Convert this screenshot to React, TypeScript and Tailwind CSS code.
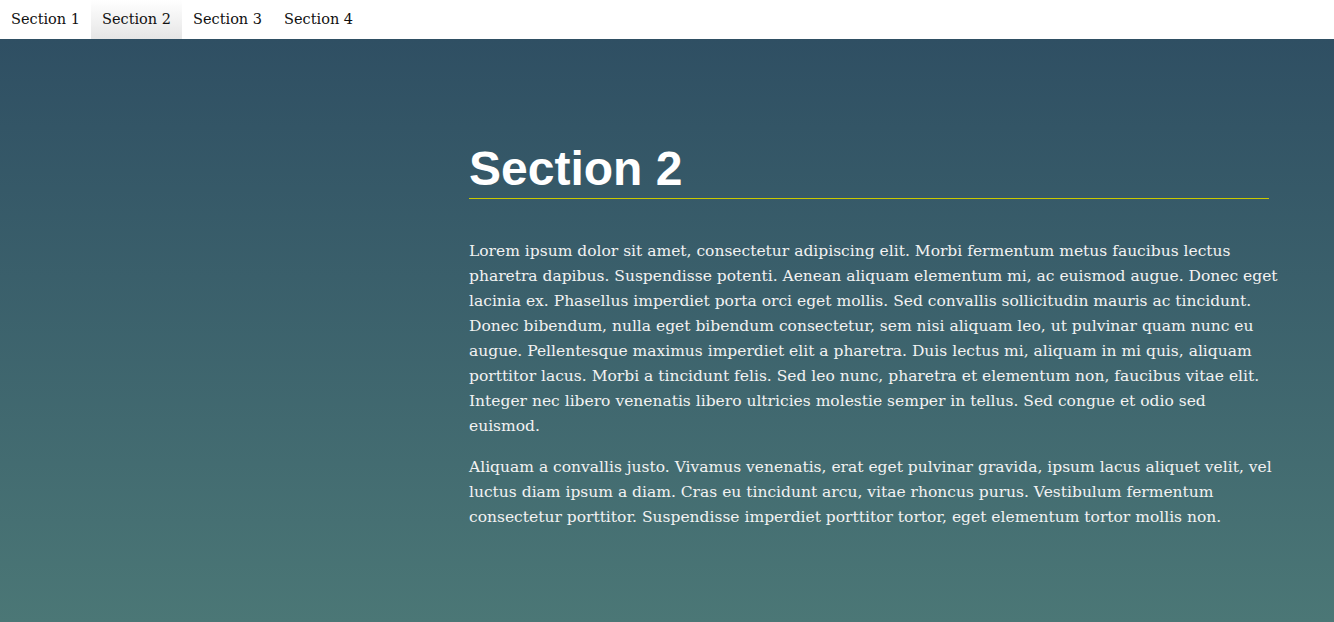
import React from "react";

const serif = { fontFamily: '"DejaVu Serif", serif' };

export default function App() {
  const items = ["Section 1", "Section 2", "Section 3", "Section 4"];
  return (
    <div className="min-h-[622px] flex flex-col" style={serif}>
      <nav className="h-[39px] bg-white flex items-stretch shrink-0">
        {items.map((t, i) => (
          <div
            key={t}
            className={
              "px-[11px] flex items-center text-[14.5px] text-[#111] " +
              (i === 1 ? "bg-gradient-to-b from-white to-[#e6e6e6]" : "")
            }
          >
            {t}
          </div>
        ))}
      </nav>
      <main className="flex-1 bg-gradient-to-b from-[#2f4f63] to-[#4b7776] pl-[469px] pt-[102px] pb-[80px] text-[#f2f2f2]">
        <div className="w-[800px]">
          <h1
            className="text-[48px] font-bold leading-[55px] text-white border-b border-[#c8c800] pb-[2px]"
            style={{ fontFamily: '"Liberation Sans", Arial, sans-serif' }}
          >
            Section 2
          </h1>
          <div className="w-[810px] mt-[40px] text-[15.5px] leading-[25px] flex flex-col gap-[16px]">
            <p>
              Lorem ipsum dolor sit amet, consectetur adipiscing elit. Morbi fermentum metus faucibus lectus pharetra dapibus. Suspendisse potenti. Aenean aliquam elementum mi, ac euismod augue. Donec eget lacinia ex. Phasellus imperdiet porta orci eget mollis. Sed convallis sollicitudin mauris ac tincidunt. Donec bibendum, nulla eget bibendum consectetur, sem nisi aliquam leo, ut pulvinar quam nunc eu augue. Pellentesque maximus imperdiet elit a pharetra. Duis lectus mi, aliquam in mi quis, aliquam porttitor lacus. Morbi a tincidunt felis. Sed leo nunc, pharetra et elementum non, faucibus vitae elit. Integer nec libero venenatis libero ultricies molestie semper in tellus. Sed congue et odio sed euismod.
            </p>
            <p>
              Aliquam a convallis justo. Vivamus venenatis, erat eget pulvinar gravida, ipsum lacus aliquet velit, vel luctus diam ipsum a diam. Cras eu tincidunt arcu, vitae rhoncus purus. Vestibulum fermentum consectetur porttitor. Suspendisse imperdiet porttitor tortor, eget elementum tortor mollis non.
            </p>
          </div>
        </div>
      </main>
    </div>
  );
}
